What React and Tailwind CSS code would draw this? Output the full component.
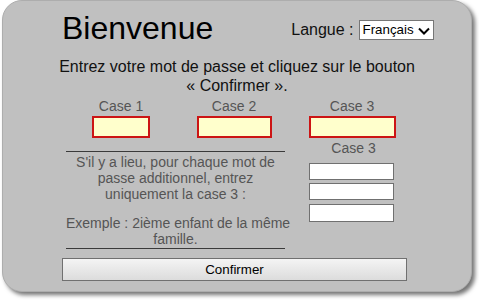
import React from 'react';

function Chevron() {
    return (
        <svg width="12" height="9" viewBox="0 0 12 9" className="absolute right-[3px] top-[6px]">
            <path d="M1 1.5 L6 6.5 L11 1.5" fill="none" stroke="#000" strokeWidth="2" />
        </svg>
    );
}

export default function App() {
    return (
        <div className="w-[479px] h-[300px] bg-white font-['Liberation_Sans',Arial,sans-serif]">
            <div className="ml-[2px] w-[470px] h-[292px] rounded-[20px] bg-[#c0c0c0] border border-[#adadad] shadow-[3px_3px_4px_rgba(0,0,0,0.55)]">

                {/* en-tête */}
                <div className="flex items-start pt-[9px] pl-[59px]">
                    <h1 className="text-[32px] leading-[37px] text-black">Bienvenue</h1>
                    <div className="ml-[78px] mt-[10px] flex items-center">
                        <span className="text-[16px] leading-[18px] text-[#111]">Langue :</span>
                        <div className="relative ml-[5px] w-[75px] h-[20px] border border-[#767676] bg-white">
                            <span className="block pl-[3px] text-[13.33px] leading-[18px] text-black">Français</span>
                            <Chevron />
                        </div>
                    </div>
                </div>

                <p className="mt-[10px] text-center text-[16px] leading-[19px] text-[#111]">
                    Entrez votre mot de passe et cliquez sur le bouton<br />« Confirmer ».
                </p>

                {/* cases */}
                <div className="mt-[3px] flex pl-[63px] text-[14px] leading-[16px] text-[#555]">
                    <div className="w-[110px] flex flex-col items-center">
                        <span>Case 1</span>
                        <div className="mt-[2px] w-[58px] h-[22px] border-2 border-[#cc1414] bg-[#ffffcc]" />
                    </div>
                    <div className="w-[116px] flex flex-col items-center">
                        <span>Case 2</span>
                        <div className="mt-[2px] w-[75px] h-[22px] border-2 border-[#cc1414] bg-[#ffffcc]" />
                    </div>
                    <div className="w-[120px] flex flex-col items-center">
                        <span>Case 3</span>
                        <div className="mt-[2px] w-[87px] h-[22px] border-2 border-[#cc1414] bg-[#ffffcc]" />
                    </div>
                </div>

                {/* mots de passe additionnels */}
                <div className="flex pl-[63px] text-[14px] leading-[16px] text-[#555]">
                    <div className="w-[219px]">
                        <div className="mt-[13px] border-t border-[#3a3a3a]" />
                        <p className="mt-[2px] text-center whitespace-nowrap">
                            S'il y a lieu, pour chaque mot de<br />passe additionnel, entrez<br />uniquement la case 3 :
                        </p>
                        <p className="mt-[13px] text-center whitespace-nowrap">
                            Exemple : 2ième enfant de la même<br />famille.
                        </p>
                        <div className="mt-[1px] border-t border-[#3a3a3a]" />
                    </div>
                    <div className="ml-[24px] mt-[2px] w-[85px] flex flex-col items-center">
                        <span className="ml-[4px]">Case 3</span>
                        <div className="mt-[7px] flex flex-col gap-[3px] w-full">
                            <div className="h-[17px] border border-[#707070] bg-white" />
                            <div className="h-[17px] border border-[#707070] bg-white" />
                            <div className="h-[18px] mt-[1px] border border-[#707070] bg-white" />
                        </div>
                    </div>
                </div>

                <button className="mt-[9px] ml-[59px] w-[345px] h-[23px] border border-[#707070] bg-gradient-to-b from-[#f4f4f4] to-[#dcdcdc] text-[13.33px] text-black">
                    Confirmer
                </button>
            </div>
        </div>
    );
}
